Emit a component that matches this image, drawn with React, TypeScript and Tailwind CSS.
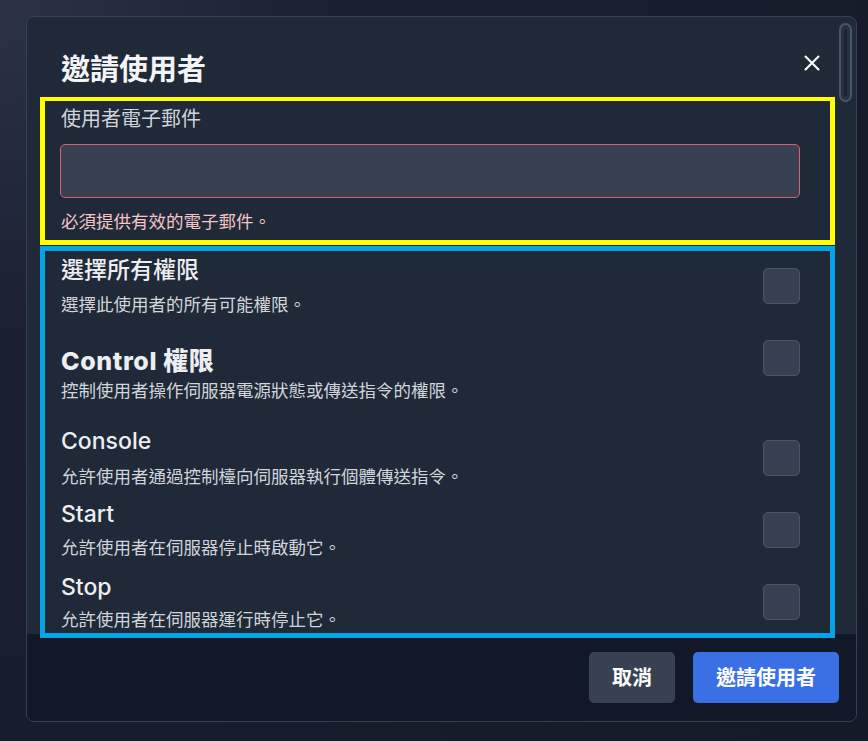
import React from "react";

const font = { fontFamily: 'Inter, "Noto Sans CJK TC", "Noto Sans", sans-serif' };

function Checkbox({ className = "" }: { className?: string }) {
  return (
    <div
      className={
        "w-[37px] h-[36px] shrink-0 rounded-[5px] bg-[#374151] border border-[#4b5563] " +
        className
      }
    />
  );
}

export default function App() {
  return (
    <div
      className="min-h-screen w-full bg-[radial-gradient(circle_at_0%_0%,#2a3244_0%,#1a2030_30%,#141a27_100%)] pl-[26px] pt-[16px]"
      style={font}
    >
      <div className="relative w-[831px] h-[706px] rounded-[8px] border border-[#364152] bg-[#1f2937] flex flex-col overflow-hidden">
        {/* scrollbar overlay */}
        <div className="absolute right-[4px] top-[6px] w-[13px] h-[79px] rounded-full border-2 border-[#4b5565] bg-[#283142] flex justify-center py-[4px] z-20">
          <div className="w-[3px] h-full rounded-full bg-[#1c2230]" />
        </div>

        {/* content */}
        <div className="h-[617px] shrink-0 pl-[13px] pr-[21px] pt-[35px] bg-[#1f2937]">
          <div className="flex items-start justify-between h-[36px]">
            <h2 className="pl-[21px] text-[29px] leading-[36px] font-bold text-[#f3f4f6]">
              邀請使用者
            </h2>
            <button className="mt-[3px] mr-[15px] w-[16px] h-[16px] text-white">
              <svg width="16" height="16" viewBox="0 0 16 16" fill="none">
                <path d="M1.5 1.5 L14.5 14.5 M14.5 1.5 L1.5 14.5" stroke="currentColor" strokeWidth="2.1" strokeLinecap="round" />
              </svg>
            </button>
          </div>

          {/* yellow box */}
          <div className="mt-[9px] border-[5px] border-t-4 border-[#ffff00] pl-[15px] pr-[30px] pt-[4px] pb-[6px]">
            <div className="pl-[1px] text-[20px] leading-[28px] text-[#d1d5db]">使用者電子郵件</div>
            <div className="mt-[11px] h-[54px] rounded-[5px] border border-[#d9636d] bg-[#374151]" />
            <div className="pl-[1px] mt-[12px] text-[17.5px] leading-[24px] text-[#f6c3c6]">
              必須提供有效的電子郵件。
            </div>
          </div>

          {/* blue box */}
          <div className="relative z-10 mt-[1px] h-[392px] border-[5px] border-[#06a3e6] pl-[16px] pr-[30px] pt-[4px] pb-[1px]">
            {/* row 1 */}
            <div className="flex items-center justify-between">
              <div>
                <div className="text-[23px] leading-[30px] font-medium text-[#eceef1]">選擇所有權限</div>
                <div className="mt-[8px] text-[17.5px] leading-[24px] text-[#d1d5db]">選擇此使用者的所有可能權限。</div>
              </div>
              <Checkbox />
            </div>
            {/* row 2 */}
            <div className="mt-[28px] flex items-start justify-between">
              <div>
                <div className="text-[25px] leading-[32px] font-extrabold text-[#eceef1] tracking-[0.6px]">Control 權限</div>
                <div className="mt-[2px] text-[17.5px] leading-[24px] text-[#d1d5db]">控制使用者操作伺服器電源狀態或傳送指令的權限。</div>
              </div>
              <Checkbox className="-mt-[5px]" />
            </div>
            {/* row 3 */}
            <div className="mt-[23px] flex items-center justify-between">
              <div>
                <div className="text-[23px] leading-[30px] font-medium text-[#eceef1]">Console</div>
                <div className="mt-[9px] text-[17.5px] leading-[24px] text-[#d1d5db]">允許使用者通過控制檯向伺服器執行個體傳送指令。</div>
              </div>
              <Checkbox />
            </div>
            {/* row 4 */}
            <div className="mt-[10px] flex items-center justify-between">
              <div>
                <div className="text-[23px] leading-[30px] font-medium text-[#eceef1]">Start</div>
                <div className="mt-[7px] text-[17.5px] leading-[24px] text-[#d1d5db]">允許使用者在伺服器停止時啟動它。</div>
              </div>
              <Checkbox />
            </div>
            {/* row 5 */}
            <div className="mt-[12px] flex items-center justify-between">
              <div>
                <div className="text-[23px] leading-[30px] font-medium text-[#eceef1]">Stop</div>
                <div className="mt-[6px] text-[17.5px] leading-[24px] text-[#d1d5db]">允許使用者在伺服器運行時停止它。</div>
              </div>
              <Checkbox />
            </div>
          </div>
        </div>

        {/* footer */}
        <div className="flex-1 bg-[#111827] flex justify-end items-start gap-[18px] pt-[18px] pr-[17px]">
          <button className="w-[86px] h-[51px] rounded-[5px] bg-[#374151] text-white text-[20px] font-bold">
            取消
          </button>
          <button className="w-[146px] h-[51px] rounded-[5px] bg-[#3a6fe6] text-white text-[20px] font-bold">
            邀請使用者
          </button>
        </div>
      </div>
    </div>
  );
}
